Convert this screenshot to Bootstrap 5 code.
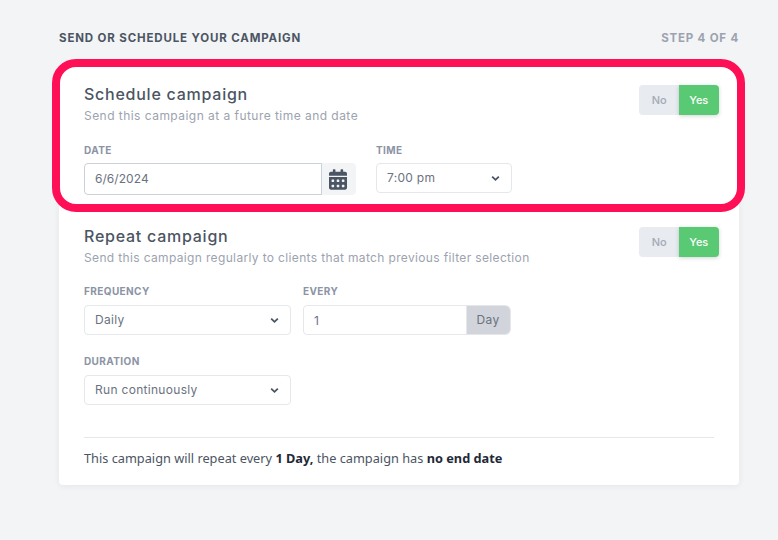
<!DOCTYPE html>
<html lang="en">
<head>
<meta charset="utf-8">
<title>Send or schedule your campaign</title>
<link href="https://cdn.jsdelivr.net/npm/bootstrap@5.3.0/dist/css/bootstrap.min.css" rel="stylesheet">
<style>
html,body{height:100%}
body{background:#f3f4f6;font-family:"Inter","Noto Sans",sans-serif;color:#4b5563;overflow:hidden}
.page-wrap{padding:30px 39px 0 59px}
.step-head{height:37px;font-size:11.5px;font-weight:700;line-height:15px;padding-top:1px}
.step-head .head-main{color:#4b5563;letter-spacing:.85px}
.step-head .head-step{color:#9ca3af;letter-spacing:.8px}
.panel{background:#fff;border-radius:4px;box-shadow:0 1px 6px rgba(31,41,55,.07);height:418px;padding:0 25px}
.sect{position:relative;height:142px;padding-top:17px}
.sect-two{height:228px}
.sect-title{font-size:16px;font-weight:500;line-height:20px;margin:0;letter-spacing:.75px;color:#4b5563}
.sect-sub{font-size:12px;line-height:16px;margin:4px 0 0;color:#9ca3af;letter-spacing:.46px}
.sect-two .sect-sub{letter-spacing:.35px}
.toggle{width:80px;height:30px;margin-right:-5px}
.sect .toggle{margin-top:1px}
.toggle .btn{width:40px;height:30px;padding:0;font-size:11px;font-weight:500;border:0;border-radius:4px;line-height:30px}
.toggle .opt-no{background:#e8ebf0;color:#a3a9b5;border-top-right-radius:0;border-bottom-right-radius:0}
.toggle .opt-yes{background:#5ac974;color:#fff;box-shadow:0 1px 4px rgba(31,41,55,.2)}
.fld-row{margin-top:20px}
.sect-two .fld-row{margin-top:19px}
.sect-two .fld-row-last{margin-top:20px}
.fld-label{display:block;font-size:10px;font-weight:700;line-height:12px;margin:0 0 7px;color:#8b93a5;letter-spacing:.4px;text-transform:uppercase}
.sect-two .fld-label{margin-bottom:8px}
.form-control,.form-select{font-size:12px;color:#6b7280;border:1px solid #e5e7eb;border-radius:4px;height:30px;padding:0 10px;letter-spacing:.3px;box-shadow:none}
.form-select{background-image:url("data:image/svg+xml,%3Csvg xmlns='http://www.w3.org/2000/svg' viewBox='0 0 10 7'%3E%3Cpath d='M1.3 1.3 5 5l3.7-3.7' fill='none' stroke='%234b5563' stroke-width='2'/%3E%3C/svg%3E");background-size:9px 7px;background-position:right 11px center}
.date-group{width:272px}
.date-group .form-control{height:32px;border-color:#cbd0da;flex:0 0 238px;letter-spacing:.05px;padding-bottom:2px}
.cal-add{width:35px;height:32px;background:#f3f4f6;border:1px solid #f3f4f6;border-radius:0 4px 4px 0;padding:0 2px 0 0;justify-content:center}
.time-col{width:136px}
.freq-col{width:207px}
.every-col{width:208px}
.day-add{width:45px;height:30px;padding:0;justify-content:center;background:#d1d5db;border:1px solid #e5e7eb;border-left:0;color:#6b7280;font-size:12px;letter-spacing:.3px}
.rule{height:1px;background:#e5e7eb;width:630px}
.summary{font-family:"Noto Sans",sans-serif;font-size:12.75px;line-height:18px;margin:11px 0 0;color:#4b5563;font-weight:400}
.summary b{color:#1f2937;font-weight:700}
.hilite{position:absolute;left:-32px;right:-31px;top:-8px;height:153px;border:8px solid #ff1056;border-radius:24px;pointer-events:none}
</style>
</head>
<body>
<div class="page-wrap">
  <div class="step-head d-flex justify-content-between">
    <span class="head-main">SEND OR SCHEDULE YOUR CAMPAIGN</span>
    <span class="head-step">STEP 4 OF 4</span>
  </div>
  <div class="panel">
    <section class="sect">
      <div class="d-flex justify-content-between align-items-start">
        <div>
          <h2 class="sect-title">Schedule campaign</h2>
          <p class="sect-sub">Send this campaign at a future time and date</p>
        </div>
        <div class="btn-group toggle" role="group">
          <button type="button" class="btn opt-no">No</button>
          <button type="button" class="btn opt-yes">Yes</button>
        </div>
      </div>
      <div class="d-flex fld-row" style="gap:20px">
        <div class="date-group">
          <label class="fld-label">Date</label>
          <div class="input-group flex-nowrap">
            <input type="text" class="form-control" value="6/6/2024">
            <span class="input-group-text cal-add">
              <svg width="18" height="21" viewBox="0 0 448 512" fill="#4b5563" aria-hidden="true"><path d="M0 464c0 26.5 21.5 48 48 48h352c26.5 0 48-21.5 48-48V192H0v272zm320-196c0-6.6 5.4-12 12-12h40c6.6 0 12 5.4 12 12v40c0 6.6-5.4 12-12 12h-40c-6.6 0-12-5.4-12-12v-40zm0 128c0-6.6 5.4-12 12-12h40c6.6 0 12 5.4 12 12v40c0 6.6-5.4 12-12 12h-40c-6.6 0-12-5.4-12-12v-40zM192 268c0-6.6 5.4-12 12-12h40c6.6 0 12 5.4 12 12v40c0 6.6-5.4 12-12 12h-40c-6.6 0-12-5.4-12-12v-40zm0 128c0-6.6 5.4-12 12-12h40c6.6 0 12 5.4 12 12v40c0 6.6-5.4 12-12 12h-40c-6.6 0-12-5.4-12-12v-40zM64 268c0-6.6 5.4-12 12-12h40c6.6 0 12 5.4 12 12v40c0 6.6-5.4 12-12 12H76c-6.6 0-12-5.4-12-12v-40zm0 128c0-6.6 5.4-12 12-12h40c6.6 0 12 5.4 12 12v40c0 6.6-5.4 12-12 12h-40c-6.6 0-12-5.4-12-12v-40zM400 64h-48V16c0-8.8-7.2-16-16-16h-32c-8.8 0-16 7.2-16 16v48H160V16c0-8.8-7.2-16-16-16h-32c-8.8 0-16 7.2-16 16v48H48C21.5 64 0 85.5 0 112v48h448v-48c0-26.5-21.5-48-48-48z"/></svg>
            </span>
          </div>
        </div>
        <div class="time-col">
          <label class="fld-label">Time</label>
          <select class="form-select"><option>7:00 pm</option></select>
        </div>
      </div>
      <div class="hilite"></div>
    </section>
    <section class="sect sect-two">
      <div class="d-flex justify-content-between align-items-start">
        <div>
          <h2 class="sect-title">Repeat campaign</h2>
          <p class="sect-sub">Send this campaign regularly to clients that match previous filter selection</p>
        </div>
        <div class="btn-group toggle" role="group">
          <button type="button" class="btn opt-no">No</button>
          <button type="button" class="btn opt-yes">Yes</button>
        </div>
      </div>
      <div class="d-flex fld-row" style="gap:12px">
        <div class="freq-col">
          <label class="fld-label">Frequency</label>
          <select class="form-select"><option>Daily</option></select>
        </div>
        <div class="every-col">
          <label class="fld-label">Every</label>
          <div class="input-group flex-nowrap">
            <input type="text" class="form-control" value="1">
            <span class="input-group-text day-add">Day</span>
          </div>
        </div>
      </div>
      <div class="freq-col fld-row fld-row-last">
        <label class="fld-label">Duration</label>
        <select class="form-select"><option>Run continuously</option></select>
      </div>
    </section>
    <div class="rule"></div>
    <p class="summary">This campaign will repeat every <b>1 Day,</b> the campaign has <b>no end date</b></p>
  </div>
</div>
<script src="https://cdn.jsdelivr.net/npm/bootstrap@5.3.0/dist/js/bootstrap.bundle.min.js"></script>
</body>
</html>
